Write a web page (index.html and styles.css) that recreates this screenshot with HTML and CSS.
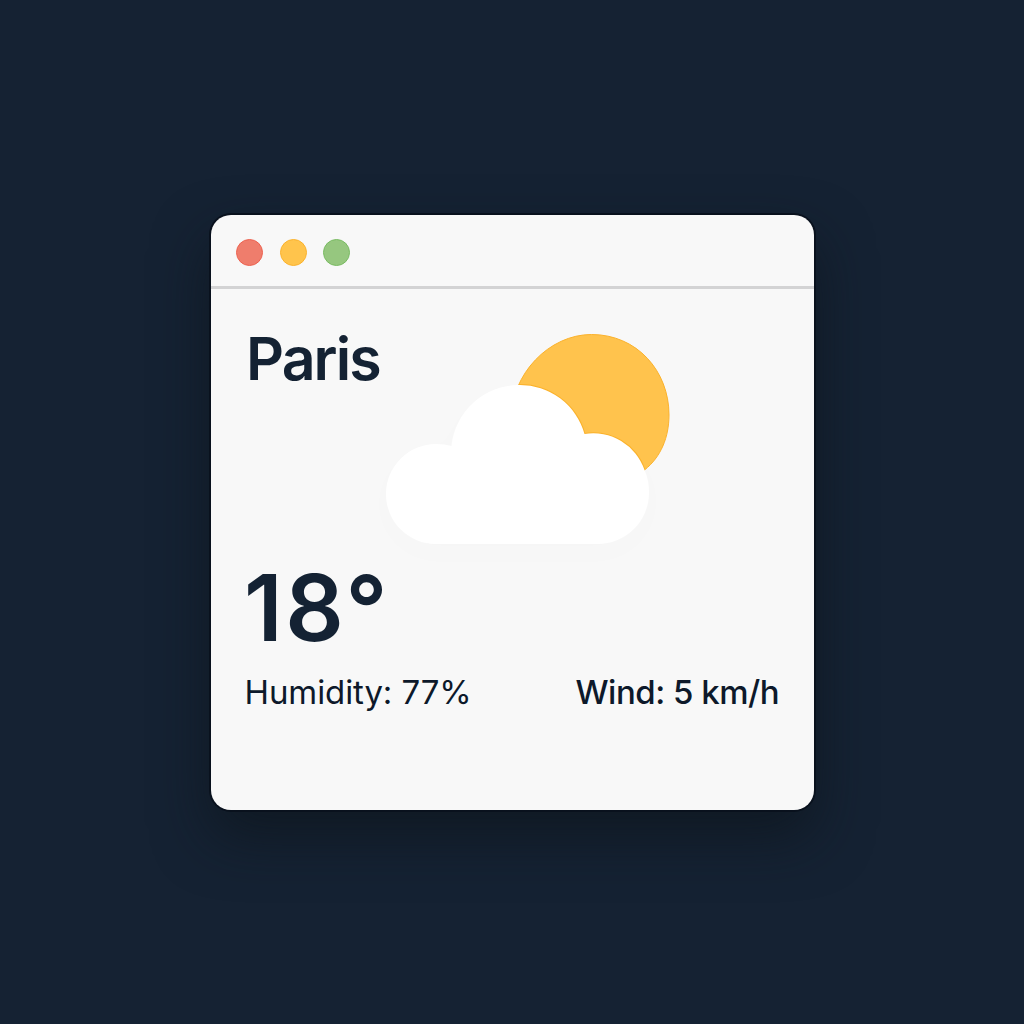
FILE: index.html
```html
<!DOCTYPE html>
<html lang="en">
<head>
<meta charset="utf-8">
<title>Weather</title>
<link rel="stylesheet" href="styles.css">
</head>
<body>
<main class="window">
  <header class="titlebar">
    <span class="dot dot-close"></span>
    <span class="dot dot-minimize"></span>
    <span class="dot dot-zoom"></span>
  </header>
  <section class="weather">
    <div class="summary">
      <h1 class="city">Paris</h1>
      <svg class="icon" width="284" height="212" viewBox="386 333 284 212" aria-hidden="true">
        <defs>
          <path id="sun" d="M591.500 334.500C637 334.500 669 371 669 415C669 437 661 457 644.500 470L590 480L511 420C511 374 549 334.500 591.500 334.500Z"/>
          <path id="cloud" d="M436 544A50 50 0 0 1 436 444Q444 444 451.500 446A68 68 0 0 1 519 385A67 67 0 0 1 584.500 434A54 54 0 0 1 644.500 470Q649 480 649 493A51.500 51.500 0 0 1 597 544Z"/>
          <clipPath id="sun-clip"><use href="#sun"/></clipPath>
        </defs>
        <use class="sun" href="#sun"/>
        <g clip-path="url(#sun-clip)"><use class="rim" href="#cloud"/></g>
        <use class="cloud" href="#cloud"/>
      </svg>
    </div>
    <div class="temperature">18°</div>
    <div class="details">
      <span class="humidity">Humidity: 77%</span>
      <span class="wind">Wind: 5 km/h</span>
    </div>
  </section>
</main>
</body>
</html>
```
FILE: styles.css
```css
* { box-sizing: border-box; }
body {
  margin: 0;
  height: 1024px;
  padding: 215px 0 0 211px;
  background: #152233;
  color: #142233;
  font-family: Inter, "Liberation Sans", sans-serif;
}
.window {
  width: 603px;
  height: 595px;
  border-radius: 20px;
  background: #f8f8f8;
  box-shadow: 0 0 0 2px #09111d, 0 26px 56px rgba(12, 20, 26, .65);
}
.titlebar {
  display: flex;
  align-items: center;
  gap: 16.5px;
  height: 74px;
  padding: 4px 25px 0;
  border-bottom: 3px solid #d3d3d4;
}
.dot { width: 27px; height: 27px; border-radius: 50%; border: 1px solid; }
.dot-close { background: #ef7d6c; border-color: #ed6250; }
.dot-minimize { background: #ffc44c; border-color: #fbb22c; }
.dot-zoom { background: #96c77f; border-color: #79bb62; }
.weather { padding: 44px 35px 0; }
.summary { display: flex; height: 212px; }
.city {
  margin: 0;
  width: 140px;
  font-size: 59px;
  line-height: 52px;
  font-weight: 600;
  letter-spacing: -1.9px;
}
.icon { flex: none; overflow: visible; }
.sun { fill: #ffc34d; stroke: #fbb22c; stroke-width: 1; }
.rim { fill: none; stroke: #fbb22c; stroke-width: 2; }
.cloud { fill: #fff; filter: drop-shadow(0 10px 12px rgba(0, 0, 0, .008)); }
.temperature {
  height: 127px;
  margin-left: -2px;
  font-size: 91.500px;
  line-height: 125px;
  font-weight: 600;
  letter-spacing: 2.500px;
}
.details {
  display: flex;
  justify-content: space-between;
  margin-left: -1.500px;
  color: #0d192a;
  font-size: 33px;
  line-height: 40px;
  white-space: nowrap;
}
.humidity { font-weight: 400; letter-spacing: -.1px; }
.wind { font-weight: 500; letter-spacing: -.5px; }
```
